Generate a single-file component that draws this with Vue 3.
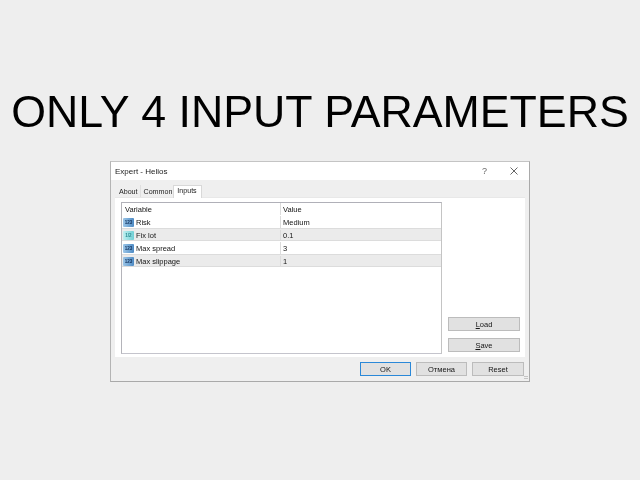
<script setup>
const rows = [
  { name: 'Risk', value: 'Medium', kind: 'num', label: '123' },
  { name: 'Fix lot', value: '0.1', kind: 'dbl', label: '1/2' },
  { name: 'Max spread', value: '3', kind: 'num', label: '123' },
  { name: 'Max slippage', value: '1', kind: 'num', label: '123' },
]
</script>

<template>
  <div class="page">
    <h1 class="headline">ONLY 4 INPUT PARAMETERS</h1>
    <div class="window">
      <div class="titlebar">
        <span class="title">Expert - Helios</span>
        <span class="help">?</span>
        <svg class="close" width="8" height="8" viewBox="0 0 8 8">
          <path d="M0.5 0.5L7.5 7.5M7.5 0.5L0.5 7.5" stroke="#555" stroke-width="0.9" fill="none" />
        </svg>
      </div>
      <div class="tabs">
        <span class="tab">About</span>
        <span class="tab">Common</span>
        <span class="tab active">Inputs</span>
      </div>
      <div class="panel">
        <div class="table">
          <div class="row head">
            <span class="col-var">Variable</span>
            <span class="col-val">Value</span>
          </div>
          <div v-for="(r, i) in rows" :key="r.name" class="row item" :class="{ odd: i % 2 === 1 }">
            <span class="col-var">
              <span class="icon" :class="r.kind"><span class="icon-text">{{ r.label }}</span></span>
              {{ r.name }}
            </span>
            <span class="col-val">{{ r.value }}</span>
          </div>
        </div>
        <div class="side">
          <button class="btn wide"><u>L</u>oad</button>
          <button class="btn wide"><u>S</u>ave</button>
        </div>
      </div>
      <div class="footer">
        <button class="btn foot primary">OK</button>
        <button class="btn foot">Отмена</button>
        <button class="btn foot">Reset</button>
      </div>
      <div class="grip"></div>
    </div>
  </div>
</template>

<style>
html, body { margin: 0; background: #eeeeee; }
</style>

<style scoped>
.page {
  width: 640px;
  height: 480px;
  background: #eeeeee;
  display: flex;
  flex-direction: column;
  align-items: center;
  overflow: hidden;
  font-family: "Liberation Sans", Arial, sans-serif;
  filter: blur(0.3px);
}
.headline {
  margin: 86px 0 0;
  font-size: 44.7px;
  line-height: 51px;
  height: 51px;
  font-weight: 400;
  color: #000;
  white-space: nowrap;
}
.window {
  position: relative;
  margin-top: 24px;
  width: 418px;
  height: 219px;
  background: #efefef;
  border: 1px solid #a9a9a9;
  border-top-color: #c4c4c4;
  border-left-color: #b4b4b4;
  display: flex;
  flex-direction: column;
  font-size: 7.5px;
  color: #151515;
}
.titlebar {
  height: 18px;
  background: #fff;
  display: flex;
  align-items: center;
  padding: 0 11px 0 4px;
  flex: none;
}
.title { font-size: 8px; flex: 1; color: #222; }
.help { font-size: 9px; color: #666; margin-right: 23px; }
.tabs {
  height: 17px;
  display: flex;
  align-items: flex-end;
  padding-left: 5px;
  flex: none;
}
.tab {
  height: 12px;
  line-height: 14px;
  padding: 0 2px 0 3px;
  border-right: 1px solid #dfdfdf;
  color: #222;
  font-size: 7.1px;
}
.tab.active {
  height: 12px;
  line-height: 11px;
  background: #fff;
  border: 1px solid #d8d8d8;
  border-bottom: 0;
  margin-bottom: -1px;
  margin-left: -2px;
  position: relative;
  padding: 0 4px 0 3px;
}
.panel {
  margin: 0 4px;
  height: 160px;
  background: #fff;
  display: flex;
  padding: 4px 5px 3px 6px;
  box-sizing: border-box;
  flex: none;
  border-top: 1px solid #e8e8e8;
}
.table {
  width: 321px;
  box-sizing: border-box;
  border: 1px solid #b4b4ba;
  border-top-color: #b0b0b8;
  border-right-color: #c4c4c4;
  border-bottom-color: #c4c4cc;
  background: #fff;
  flex: none;
}
.row {
  display: flex;
  height: 13px;
  align-items: center;
  box-sizing: border-box;
}
.row.head { height: 12px; }
.row.item { padding-top: 1px; }
.row.odd {
  background: #ebebeb;
  border-top: 1px solid #dcdcdc;
  border-bottom: 1px solid #dcdcdc;
}
.col-var {
  width: 159px;
  box-sizing: border-box;
  padding-left: 1px;
  display: flex;
  align-items: center;
  gap: 2px;
  flex: none;
  border-right: 1px solid #dcdcdc;
  height: 100%;
}
.col-val { padding-left: 2px; }
.head .col-var { padding-left: 3px; }
.icon {
  width: 11px;
  height: 9px;
  border-radius: 1px;
  display: flex;
  align-items: center;
  justify-content: center;
  flex: none;
}
.icon.num { background: linear-gradient(90deg, #9cc6e8, #4d8ac4); }
.icon.dbl { background: linear-gradient(90deg, #c0eff0, #6fcfd5); }
.icon-text { font-size: 4.5px; line-height: 5px; font-weight: 700; color: #12305a; }
.icon.dbl .icon-text { color: #2a8a90; }
.side {
  flex: 1;
  display: flex;
  flex-direction: column;
  align-items: flex-end;
  justify-content: flex-end;
  gap: 7px;
  padding-bottom: 2px;
  padding-right: 0;
}
.btn {
  box-sizing: border-box;
  background: #e1e1e1;
  border: 1px solid #bcbcbc;
  font-family: inherit;
  font-size: 7.5px;
  color: #151515;
  padding: 0;
  margin: 0;
}
.btn.wide { width: 72px; height: 14px; }
.footer {
  display: flex;
  justify-content: flex-end;
  gap: 5px;
  padding: 5px 5px 0 0;
}
.btn.foot { width: 51px; height: 14px; }
.btn.foot:last-child { width: 52px; }
.btn.primary { border: 1px solid #2a88d8; }
.grip {
  position: absolute;
  right: 1px;
  bottom: 1px;
  width: 4px;
  height: 4px;
  background: repeating-linear-gradient(#c4c4c4 0 1px, transparent 1px 2px);
}
</style>
